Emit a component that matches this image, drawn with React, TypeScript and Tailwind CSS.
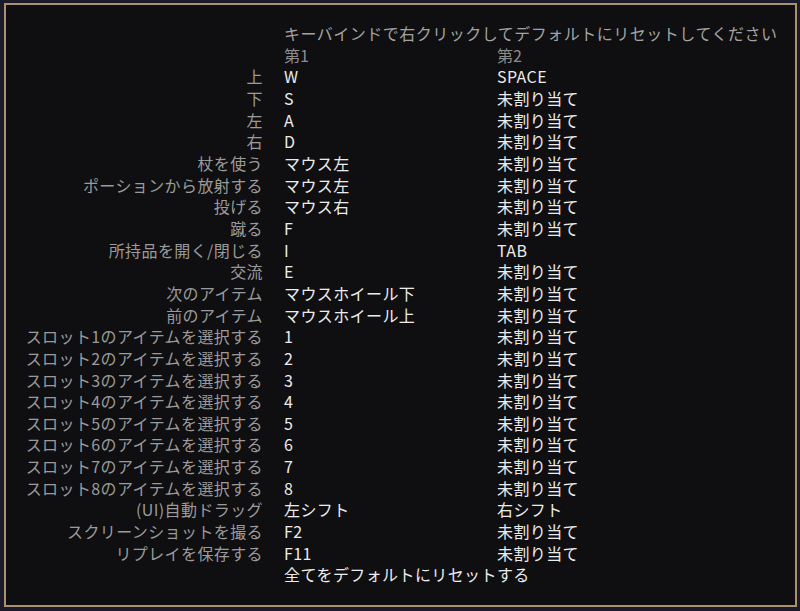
import React from "react";

const rows: [string, string, string][] = [
  ["上", "W", "SPACE"],
  ["下", "S", "未割り当て"],
  ["左", "A", "未割り当て"],
  ["右", "D", "未割り当て"],
  ["杖を使う", "マウス左", "未割り当て"],
  ["ポーションから放射する", "マウス左", "未割り当て"],
  ["投げる", "マウス右", "未割り当て"],
  ["蹴る", "F", "未割り当て"],
  ["所持品を開く/閉じる", "I", "TAB"],
  ["交流", "E", "未割り当て"],
  ["次のアイテム", "マウスホイール下", "未割り当て"],
  ["前のアイテム", "マウスホイール上", "未割り当て"],
  ["スロット1のアイテムを選択する", "1", "未割り当て"],
  ["スロット2のアイテムを選択する", "2", "未割り当て"],
  ["スロット3のアイテムを選択する", "3", "未割り当て"],
  ["スロット4のアイテムを選択する", "4", "未割り当て"],
  ["スロット5のアイテムを選択する", "5", "未割り当て"],
  ["スロット6のアイテムを選択する", "6", "未割り当て"],
  ["スロット7のアイテムを選択する", "7", "未割り当て"],
  ["スロット8のアイテムを選択する", "8", "未割り当て"],
  ["(UI)自動ドラッグ", "左シフト", "右シフト"],
  ["スクリーンショットを撮る", "F2", "未割り当て"],
  ["リプレイを保存する", "F11", "未割り当て"],
];

export default function App() {
  return (
    <div
      className="w-[800px] h-[611px] bg-[#1c1a2b] pt-[3px] pl-[4px] pr-[3px] pb-[4px]"
      style={{ fontFamily: '"Noto Sans CJK JP", "Noto Sans", sans-serif' }}
    >
      <div className="w-full h-full border-2 border-[#a8926f] bg-[#0f0e10] pt-[18px] text-[16px] leading-[21.65px]">
        <div className="grid grid-cols-[257px_192px_1fr] gap-x-[21px]">
          <div />
          <div className="col-span-2 text-[#a3a3a3] tracking-[0.5px] whitespace-nowrap">
            キーバインドで右クリックしてデフォルトにリセットしてください
          </div>
          <div />
          <div className="text-[#8c8c8c]">第1</div>
          <div className="text-[#8c8c8c]">第2</div>
          {rows.map(([label, a, b]) => (
            <React.Fragment key={label}>
              <div className="text-right text-[#9b9b9b] whitespace-nowrap tracking-[0.4px]">{label}</div>
              <div className="text-[#ececec] whitespace-nowrap tracking-[0.4px]">{a}</div>
              <div className="text-[#ececec] whitespace-nowrap tracking-[0.4px]">{b}</div>
            </React.Fragment>
          ))}
          <div />
          <div className="col-span-2 text-[#ececec] tracking-[0.4px]">全てをデフォルトにリセットする</div>
        </div>
      </div>
    </div>
  );
}
